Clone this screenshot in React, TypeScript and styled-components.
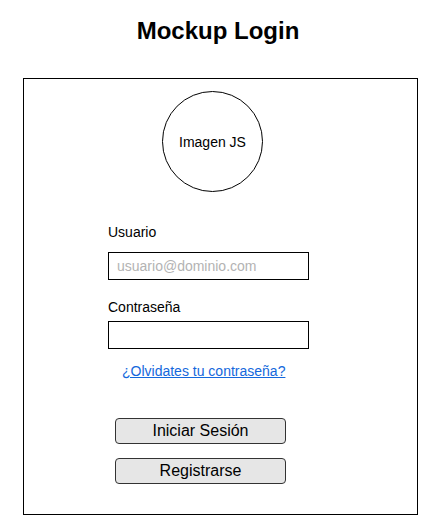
import React from "react";
import styled, { createGlobalStyle } from "styled-components";

const GlobalStyle = createGlobalStyle`
  html, body {
    margin: 0;
    padding: 0;
    background: #ffffff;
    font-family: "Liberation Sans", Arial, sans-serif;
    color: #000;
  }
  * { box-sizing: border-box; }
`;

const Page = styled.div`
  width: 442px;
  height: 529px;
  padding-top: 17px;
  overflow: hidden;
`;

const Title = styled.h1`
  margin: 0;
  padding-right: 6px;
  font-size: 24px;
  line-height: 28px;
  font-weight: 700;
  text-align: center;
`;

const Card = styled.form`
  margin: 33px 0 0 23px;
  width: 395px;
  height: 437px;
  border: 1px solid #000;
  padding: 12px 0 0 84px;
  display: flex;
  flex-direction: column;
  align-items: flex-start;
`;

const Avatar = styled.div`
  margin-left: 54px;
  width: 101px;
  height: 101px;
  border: 1px solid #000;
  border-radius: 50%;
  display: flex;
  align-items: center;
  justify-content: center;
  font-size: 14px;
  padding-top: 1px;
`;

const Label = styled.label<{ $top: number }>`
  margin-top: ${(p) => p.$top}px;
  font-size: 14px;
  line-height: 16px;
`;

const Input = styled.input<{ $top: number }>`
  margin-top: ${(p) => p.$top}px;
  width: 201px;
  height: 28px;
  border: 1px solid #000;
  border-radius: 0;
  padding: 0 8px;
  font-family: "Liberation Sans", Arial, sans-serif;
  font-size: 14px;
  outline: none;
  &::placeholder {
    color: #b3b3b3;
  }
`;

const Link = styled.a`
  margin: 14px 0 0 14px;
  font-size: 14px;
  line-height: 16px;
  color: #1468dc;
  text-decoration: underline;
  cursor: pointer;
`;

const Button = styled.button<{ $top: number }>`
  margin: ${(p) => p.$top}px 0 0 7px;
  width: 171px;
  height: 26px;
  background: #e6e6e6;
  border: 1px solid #333;
  border-radius: 4px;
  font-family: "Liberation Sans", Arial, sans-serif;
  font-size: 16px;
  color: #000;
  padding: 0;
  display: flex;
  align-items: center;
  justify-content: center;
  cursor: pointer;
`;

export default function App() {
  return (
    <>
      <GlobalStyle />
      <Page>
        <Title>Mockup Login</Title>
        <Card onSubmit={(e) => e.preventDefault()}>
          <Avatar>Imagen JS</Avatar>
          <Label $top={32} htmlFor="usuario">Usuario</Label>
          <Input $top={12} id="usuario" type="text" placeholder="usuario@dominio.com" />
          <Label $top={19} htmlFor="pass">Contraseña</Label>
          <Input $top={6} id="pass" type="password" />
          <Link>¿Olvidates tu contraseña?</Link>
          <Button $top={39} type="submit">Iniciar Sesión</Button>
          <Button $top={14} type="button">Registrarse</Button>
        </Card>
      </Page>
    </>
  );
}
